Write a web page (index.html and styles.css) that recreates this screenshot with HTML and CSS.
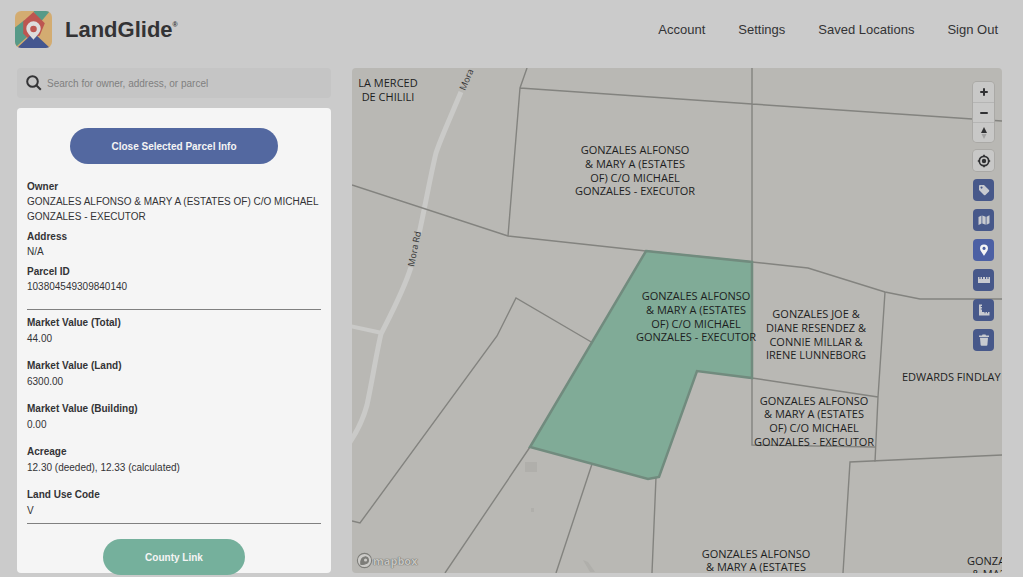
FILE: index.html
```html
<!DOCTYPE html>
<html lang="en">
<head>
<meta charset="utf-8">
<title>LandGlide</title>
<link rel="stylesheet" href="styles.css">
</head>
<body>
<header class="topbar">
  <a class="brand" href="#">
    <svg class="brand-mark" viewBox="0 0 36 36" aria-hidden="true">
      <defs><clipPath id="tile"><rect width="36" height="36" rx="6"/></clipPath></defs>
      <g clip-path="url(#tile)">
        <rect width="36" height="36" fill="#d3ac71"/>
        <path d="M0 16 9 9 20 18 4 32 0 36Z" fill="#579a88"/>
        <path d="M18 0H34L24 12Z" fill="#579a88"/>
        <path d="M18 1 29 12 24 24 12 26 8 22V10Z" fill="#bd5650"/>
        <path d="M18 21 34 36H2Z" fill="#44568f"/>
        <path d="M18 28C15 24 11 21 11 17a7 7 0 0 1 14 0C25 21 21 24 18 28Z" fill="#dddcdc"/>
        <circle cx="18" cy="17.500" r="3.200" fill="#bd5650"/>
      </g>
    </svg>
    <span class="brand-name">LandGlide<sup class="brand-reg">®</sup></span>
  </a>
  <nav class="menu">
    <a href="#">Account</a>
    <a href="#">Settings</a>
    <a href="#">Saved Locations</a>
    <a href="#">Sign Out</a>
  </nav>
</header>
<main class="layout">
  <aside class="sidebar">
    <label class="search">
      <svg class="search-icon" viewBox="0 0 16 16" aria-hidden="true"><circle cx="6.5" cy="6.5" r="5.3"/><path d="m10.5 10.5 4.3 4.3"/></svg>
      <input class="search-input" type="text" aria-label="Search" placeholder="Search for owner, address, or parcel">
    </label>
    <section class="panel">
      <button class="pill pill-close" type="button">Close Selected Parcel Info</button>
      <dl class="facts">
        <dt>Owner</dt><dd>GONZALES ALFONSO &amp; MARY A (ESTATES OF) C/O MICHAEL GONZALES - EXECUTOR</dd>
        <dt>Address</dt><dd>N/A</dd>
        <dt>Parcel ID</dt><dd>103804549309840140</dd>
      </dl>
      <dl class="facts values">
        <dt>Market Value (Total)</dt><dd>44.00</dd>
        <dt>Market Value (Land)</dt><dd>6300.00</dd>
        <dt>Market Value (Building)</dt><dd>0.00</dd>
        <dt>Acreage</dt><dd>12.30 (deeded), 12.33 (calculated)</dd>
        <dt>Land Use Code</dt><dd>V</dd>
      </dl>
      <a class="pill pill-county" href="#">County Link</a>
    </section>
  </aside>
  <section class="map" aria-label="Parcel map">
    <svg class="map-canvas" viewBox="352 68 650 505" preserveAspectRatio="xMinYMin slice">
      <defs>
        <path id="roadTop" d="M465 91 488 37"/>
        <path id="roadMid" d="M414 267 424 217"/>
      </defs>
      <g class="building"><path d="M525 462h12v10h-12zM531 508h3v4h-3zM583 560l5 2 7 10h-5z"/></g>
      <g class="road">
        <path d="M461 92C451 116 440 140 436 153C431 173 425 207 419 234"/>
        <path d="M411 267C404 290 388 320 381 334C377 350 372 382 367 405C363 420 358 430 350 442"/>
        <path class="road-minor" d="M350 326 382 333"/>
      </g>
      <g class="lines">
        <path d="M352 185 508 236 646 251 752 262 808 268 885 292 920 299H1002"/>
        <path d="M527 68 520 88 508 236M520 88 752 104 1002 121M752 68V262"/>
        <path d="M352 521 360 523 497 336 516 298 593 343"/>
        <path d="M530 447 445 573M592 464 556 573M656 477 652 573"/>
        <path d="M752 262V445L875 447M752 378 878 397M885 292 878 397 875 462M843 573 850 462 1002 455"/>
      </g>
      <path class="selected" d="M646 251 752 262V378L697 371 659 477 648 479 530 447Z"/>
      <g class="label">
        <text><tspan x="388" y="87">LA MERCED</tspan><tspan x="388" y="101">DE CHILILI</tspan></text>
        <text><tspan x="635" y="154">GONZALES ALFONSO</tspan><tspan x="635" y="168">&amp; MARY A (ESTATES</tspan><tspan x="635" y="182">OF) C/O MICHAEL</tspan><tspan x="635" y="195">GONZALES - EXECUTOR</tspan></text>
        <text><tspan x="696" y="300">GONZALES ALFONSO</tspan><tspan x="696" y="314">&amp; MARY A (ESTATES</tspan><tspan x="696" y="328">OF) C/O MICHAEL</tspan><tspan x="696" y="341">GONZALES - EXECUTOR</tspan></text>
        <text><tspan x="816" y="318">GONZALES JOE &amp;</tspan><tspan x="816" y="332">DIANE RESENDEZ &amp;</tspan><tspan x="816" y="346">CONNIE MILLAR &amp;</tspan><tspan x="816" y="359">IRENE LUNNEBORG</tspan></text>
        <text><tspan x="814" y="405">GONZALES ALFONSO</tspan><tspan x="814" y="418">&amp; MARY A (ESTATES</tspan><tspan x="814" y="432">OF) C/O MICHAEL</tspan><tspan x="814" y="446">GONZALES - EXECUTOR</tspan></text>
        <text><tspan x="756" y="558">GONZALES ALFONSO</tspan><tspan x="756" y="571">&amp; MARY A (ESTATES</tspan></text>
        <text class="label-start"><tspan x="902" y="381">EDWARDS FINDLAY</tspan><tspan x="967" y="565">GONZALES</tspan><tspan x="972" y="578">&amp; MARY A</tspan></text>
      </g>
      <text class="road-name"><textPath href="#roadTop">Mora Rd</textPath></text>
      <text class="road-name"><textPath href="#roadMid">Mora Rd</textPath></text>
    </svg>
    <div class="tools">
      <div class="group">
        <button type="button" aria-label="Zoom in"><svg viewBox="0 0 16 16"><path class="thick" d="M8 5v6M5 8h6"/></svg></button>
        <button type="button" aria-label="Zoom out"><svg viewBox="0 0 16 16"><path class="thick" d="M5 8h6"/></svg></button>
        <button type="button" aria-label="Reset north"><svg viewBox="0 0 16 16"><path d="M8 2l3 6H5z" fill="#303133"/><path d="M5.500 9h5L8 14z" fill="#a2a2a2"/></svg></button>
      </div>
      <div class="group">
        <button type="button" aria-label="Find my location"><svg viewBox="0 0 16 16"><g fill="none" stroke="#303133" stroke-width="1.700"><circle cx="8" cy="8" r="4.700"/><path d="M8 1.800v2M8 12.200v2M1.800 8h2M12.200 8h2"/></g><circle cx="8" cy="8" r="2.200" fill="#303133"/></svg></button>
      </div>
      <button class="tool" type="button" aria-label="Labels"><svg viewBox="0 0 16 16"><path fill-rule="evenodd" d="M3 4q0-1 1-1h4l5 5q.6.7 0 1.400L9.400 13q-.7.6-1.400 0L3 8zM5.500 4.500a1 1 0 1 0 .1 0z"/></svg></button>
      <button class="tool" type="button" aria-label="Map style"><svg viewBox="0 0 16 16"><path d="M2.500 5 5.500 3.500v8L2.500 13zM6.300 3.500l3.400 1.300v8l-3.400-1.300zM10.500 4.800l3-1.500v8l-3 1.500z"/></svg></button>
      <button class="tool tool-active" type="button" aria-label="Parcel info"><svg viewBox="0 0 16 16"><path fill-rule="evenodd" d="M8 14C7 11.500 4 9 4 6.500a4 4 0 0 1 8 0C12 9 9 11.500 8 14zM8 4.800a1.600 1.600 0 1 0 .1 0z"/></svg></button>
      <button class="tool" type="button" aria-label="Measure distance"><svg viewBox="0 0 16 16"><path d="M2 5h1.500v2h1V5H6v2h1V5h2v2h1V5h1.500v2h1V5H14v6H2z"/></svg></button>
      <button class="tool" type="button" aria-label="Measure area"><svg viewBox="0 0 16 16"><path d="M3 2.500h3V4H4.800v1H6v1.500H4.800v1H6V10h2.500v1.200h1V10H11v1.200h1V10h1.500v3.500H3z"/></svg></button>
      <button class="tool" type="button" aria-label="Clear"><svg viewBox="0 0 16 16"><path d="M3 3.500h3L6.500 2.500h3L10 3.500h3V5H3zM4 5.800h8L11.400 13q-.1.800-1 .8H5.600q-.9 0-1-.8z"/></svg></button>
    </div>
    <a class="mapbox" href="#"><svg viewBox="0 0 16 16" aria-hidden="true"><circle cx="8" cy="8" r="6.700"/><path d="M4.500 11.500C4 8 5.500 4.500 9 4.500a3.300 3.300 0 0 1 0 6.500c-1.500.8-3 .8-4.500.5z"/><circle class="dot" cx="9" cy="7.500" r="1.500"/></svg>mapbox</a>
  </section>
</main>
</body>
</html>
```

FILE: styles.css
```css
* { box-sizing: border-box; }

body {
  margin: 0;
  min-height: 100vh;
  display: flex;
  flex-direction: column;
  background: #cbcbcb;
  color: #333335;
  font: 10px/15px "Liberation Sans", Arial, sans-serif;
}

a { color: inherit; text-decoration: none; }

.topbar {
  display: flex;
  align-items: center;
  justify-content: space-between;
  padding: 11px 25px 0 15px;
}

.brand { display: flex; align-items: center; gap: 13px; }
.brand-mark { width: 37px; height: 37px; }
.brand-name { font-size: 22px; line-height: 37px; font-weight: bold; }
.brand-reg { font-size: 7px; line-height: 0; vertical-align: 10px; }
.menu { display: flex; gap: 33px; font-size: 13px; }

.layout {
  flex: 1;
  display: grid;
  grid-template-columns: minmax(260px, 314px) minmax(0, 1fr);
  gap: 21px;
  padding: 20px 21px 4px 17px;
}

.sidebar { display: flex; flex-direction: column; gap: 10px; }

.search {
  display: flex;
  align-items: center;
  gap: 5px;
  height: 30px;
  padding: 0 9px;
  border-radius: 4px;
  background: #c5c5c5;
}
.search-icon { width: 16px; height: 16px; fill: none; stroke: #333335; stroke-width: 2; }
.search-input { flex: 1; border: 0; padding: 0; background: none; font: inherit; color: inherit; }
.search-input::placeholder { color: #808080; opacity: 1; }

.panel {
  flex: 1;
  display: flex;
  flex-direction: column;
  padding: 20px 10px 0;
  border-radius: 4px;
  background: #f5f5f5;
}

.pill {
  align-self: center;
  display: grid;
  place-items: center;
  height: 36px;
  border: 0;
  border-radius: 18px;
  color: #f5f5f5;
  font: bold 10px/15px "Liberation Sans", Arial, sans-serif;
}
.pill-close { padding: 0 41px; background: #5368a0; }
.pill-county { margin: 15px 0 -2px; padding: 0 42px; background: #75b09c; }

.facts { margin: 0; padding: 15px 0; border-bottom: 1px solid #808080; }
.facts dt { font-weight: bold; }
.facts dd { margin: 0 0 5px; }
.facts:not(.values) dd:last-child { margin: 0; }
.values { padding: 5px 0 4px; }
.values dt { line-height: 16px; }
.values dd { margin: 0 0 11px; line-height: 16px; }
.values dd:last-child { margin: 0; }

.map {
  position: relative;
  overflow: hidden;
  border-radius: 4px;
  background: #b9b8b4;
}
.map-canvas { position: absolute; inset: 0; width: 100%; height: 100%; }
.road { fill: none; stroke: #cacac8; stroke-width: 5; }
.road-minor { stroke-width: 4; }
.building { fill: #b0afab; }
.lines { fill: none; stroke: #83837f; stroke-width: 1.4; }
.selected { fill: #80ab97; stroke: #718b7e; stroke-width: 2.5; }
.label { fill: #1d1e1e; font: 11px "Open Sans", sans-serif; text-anchor: middle; }
.label-start { text-anchor: start; }
.road-name { fill: #333; font: 9px "Open Sans", sans-serif; }

.tools {
  position: absolute;
  top: 14px;
  right: 8px;
  display: grid;
  gap: 8px;
}
.tools button {
  display: grid;
  place-items: center;
  width: 21px;
  height: 20px;
  padding: 0;
  border: 0;
  background: #c8c8c7;
}
.tools svg { width: 16px; height: 16px; }
.tools .group button:only-child { height: 21px; }
.thick { stroke: #303133; stroke-width: 2; stroke-linecap: round; }
.group { border-radius: 4px; overflow: hidden; box-shadow: 0 0 0 1px #aaa9a6; }
.group button + button { border-top: 1px solid #b5b5b4; }
.tools .tool { height: 22px; border-radius: 4px; background: #47588a; fill: #c8cad0; }
.tools .tool-active { background: #4c60a4; fill: #f5f5f5; }

.mapbox {
  position: absolute;
  left: 4px;
  bottom: 4px;
  display: flex;
  align-items: center;
  color: #c6c5c2;
  font: bold 11px/16px "Open Sans", sans-serif;
  text-shadow: 0 0 1px #62625f, 0 0 1px #62625f;
}
.mapbox svg { width: 17px; height: 17px; fill: #7d7d79; stroke: #7d7d79; stroke-width: 1; }
.mapbox svg > circle:first-child { fill: #cccbc8; }
.mapbox .dot { fill: #cccbc8; stroke: none; }
```
